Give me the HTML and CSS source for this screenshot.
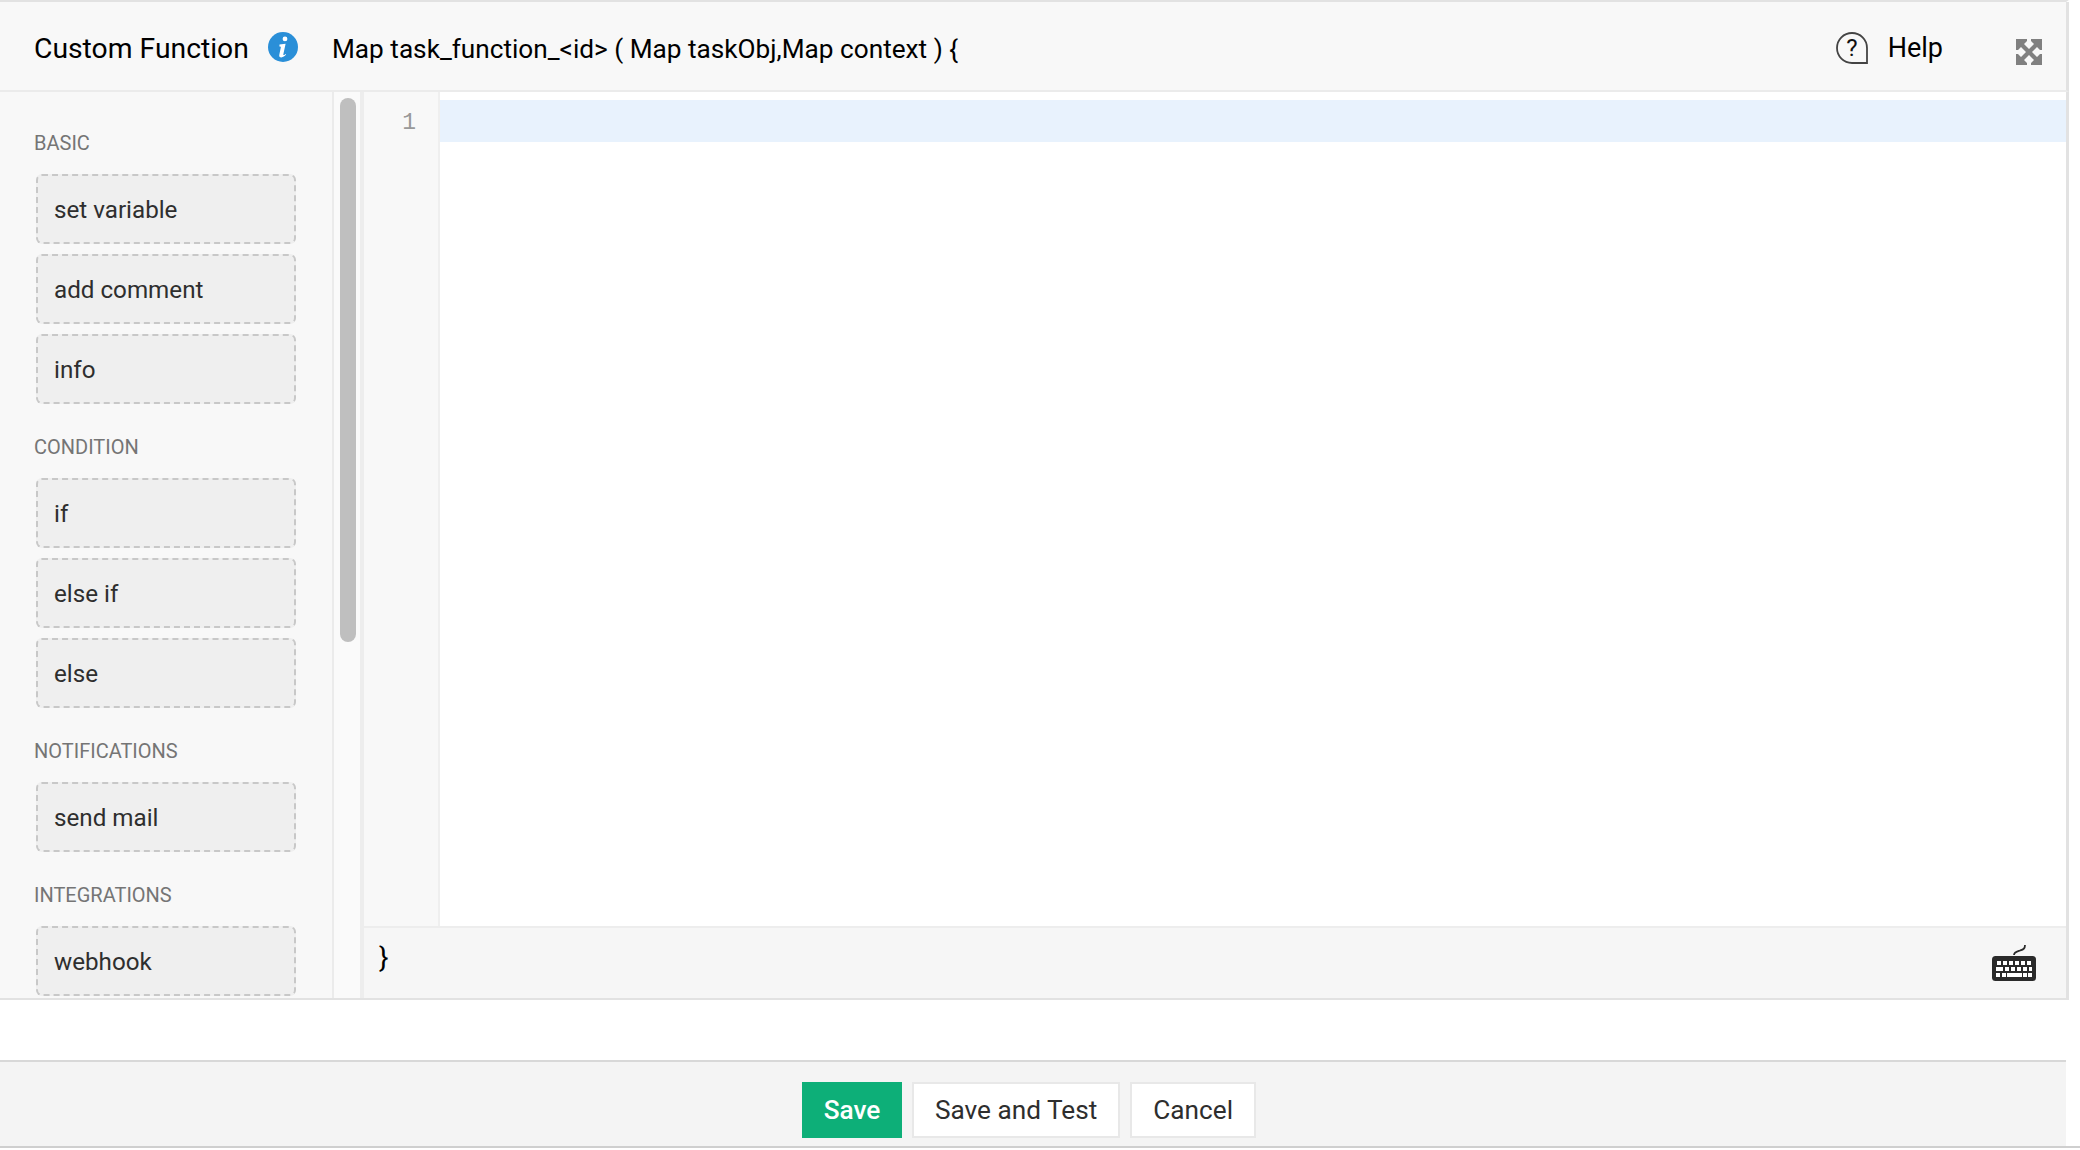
FILE: index.html
```html
<!DOCTYPE html>
<html lang="en">
<head>
<meta charset="utf-8">
<title>Custom Function</title>
<link rel="stylesheet" href="styles.css">
</head>
<body>
<div class="app">
  <div class="panel">
    <header class="head">
      <span class="title">Custom Function</span>
      <svg class="info" width="30" height="30" viewBox="0 0 30 30"><circle cx="15" cy="15" r="15" fill="#2a8fd8"/><path d="M17 4.500a2.400 2.400 0 1 1 0 4.800 2.400 2.400 0 0 1 0-4.800zM11.500 12.600l6.100-.8-2.300 10.600c-.1.700.4.900 1 .5l1.300-1 .5.700c-1.500 1.800-3.100 2.800-4.700 2.800-1.700 0-2.500-1-2.100-2.700l1.500-7.100c.1-.7-.2-1-1.400-1z" fill="#fff"/></svg>
      <span class="signature">Map task_function_&lt;id&gt; ( Map taskObj,Map context ) {</span>
      <div class="help">
        <svg width="32" height="32" viewBox="0 0 32 32"><path d="M31 31H16A15 15 0 1 1 31 16z" fill="none" stroke="#444" stroke-width="1.800"/><text x="16" y="24" class="qmark">?</text></svg>
        <span>Help</span>
      </div>
      <svg class="expand" width="26" height="26" viewBox="0 0 26 26"><path fill="#808080" d="M0 0h11v2L8 5l5 5 5-5-3-3V0h11v11h-2l-3-3-5 5 5 5 3-3h2v11H15v-2l3-3-5-5-5 5 3 3v2H0V15h2l3 3 5-5-5-5-3 3H0z"/></svg>
    </header>
    <div class="main">
      <aside class="side">
        <h3 class="group first">BASIC</h3>
        <div class="item">set variable</div>
        <div class="item">add comment</div>
        <div class="item">info</div>
        <h3 class="group">CONDITION</h3>
        <div class="item">if</div>
        <div class="item">else if</div>
        <div class="item">else</div>
        <h3 class="group">NOTIFICATIONS</h3>
        <div class="item">send mail</div>
        <h3 class="group">INTEGRATIONS</h3>
        <div class="item">webhook</div>
      </aside>
      <div class="track"><div class="thumb"></div></div>
      <section class="editor">
        <div class="code">
          <div class="gutter"><span class="lineno">1</span></div>
          <div class="lines"><div class="active"></div></div>
        </div>
        <div class="closing">
          <span class="brace">}</span>
          <svg width="44" height="37" viewBox="0 0 44 37"><path d="M22 11c0-3 3-3.500 6-4.500s5-1.500 5-5.500" fill="none" stroke="#2a2a2a" stroke-width="1.800"/><rect y="12" width="44" height="25" rx="3.500" fill="#2a2a2a"/><path fill="#fff" d="M5 17h4v4H5zM11 17h4v4h-4zM17 17h4v4h-4zM23 17h4v4h-4zM29 17h4v4h-4zM35 17h4v4h-4zM4 23h7v4H4zM13 23h4v4h-4zM19 23h4v4h-4zM25 23h4v4h-4zM31 23h4v4h-4zM37 23h3v4h-3zM4 29h4v4H4zM10 29h4v4h-4zM15 29h15v4H15zM31 29h4v4h-4zM36 29h4v4h-4z"/></svg>
        </div>
      </section>
    </div>
    <div class="spacer"></div>
    <footer class="foot">
      <button class="btn primary">Save</button>
      <button class="btn">Save and Test</button>
      <button class="btn">Cancel</button>
    </footer>
  </div>
  <div class="baseline"></div>
</div>
</body>
</html>
```
FILE: styles.css
```css
* { box-sizing: border-box; }
html, body { margin: 0; height: 100%; background: #fff; }
body { font-family: Roboto, "Liberation Sans", sans-serif; color: #000; overflow: hidden; }
.app { height: 1150px; }
.panel { width: 2069px; height: 1146px; display: flex; flex-direction: column; border-top: 2px solid #e2e2e2; border-right: 3px solid transparent; }
.head { height: 90px; flex: none; display: flex; align-items: center; padding: 4px 0 0 34px; background: #f8f8f8; border-bottom: 2px solid #ebebeb; margin-right: -3px; border-right: 3px solid #e2e2e2; }
.title { font-size: 28.300px; width: 234px; }
.info { flex: none; margin-top: -2px; }
.signature { font-size: 26.200px; margin: 1px 0 0 34px; }
.help { margin-left: auto; display: flex; align-items: center; gap: 20px; font-size: 27px; }
.qmark { font: 24px Roboto, sans-serif; fill: #111; text-anchor: middle; }
.expand { flex: none; margin: 8px 24px 0 73px; }
.main { height: 908px; flex: none; display: flex; overflow: hidden; border-bottom: 2px solid #e2e2e2; margin-right: -3px; border-right: 3px solid #e2e2e2; }
.side { width: 334px; flex: none; padding: 0 36px; background: #f8f8f8; border-right: 2px solid #ebebeb; overflow: hidden; }
.group { margin: 32px 0 19px -2px; height: 23px; font-size: 20px; line-height: 23px; font-weight: 400; color: #757575; }
.group.first { margin-top: 40px; margin-bottom: 19px; }
.item { height: 70px; margin-bottom: 10px; padding: 2px 0 0 16px; display: flex; align-items: center; font-size: 24.200px; color: #2e2e2e; background: #efefef; border: 2px dashed #c8c8c8; border-radius: 6px; width: 260px; }
.track { width: 30px; flex: none; padding: 6px 6px 0; background: #fafafa; border-right: 4px solid #ededed; }
.thumb { width: 16px; height: 544px; background: #bfbfbf; border-radius: 8px; }
.editor { flex: 1; min-width: 0; display: flex; flex-direction: column; }
.code { flex: 1; display: flex; min-height: 0; border-bottom: 2px solid #ededed; }
.gutter { width: 76px; flex: none; background: #f8f8f8; border-right: 2px solid #efefef; padding: 10px 22px 0 0; text-align: right; height: 100%; }
.lineno { display: block; font: 23px/42px "Liberation Mono", monospace; color: #999; }
.lines { flex: 1; padding-top: 8px; background: #fff; }
.active { height: 42px; background: #e8f2fd; }
.closing { height: 70px; flex: none; display: flex; align-items: flex-start; justify-content: space-between; padding: 14px 30px 0 15px; background: #f6f6f6; }
.closing svg { margin-top: 2px; }
.brace { font-size: 28px; line-height: 32px; }
.spacer { height: 60px; flex: none; background: #fff; }
.foot { flex: 1; display: flex; justify-content: center; align-items: flex-start; gap: 10px; padding: 20px 8px 0 0; background: #f4f4f4; border-top: 2px solid #d8d8d8; }
.baseline { height: 2px; background: #cfcfcf; }
.btn { height: 56px; padding: 0 21px; font: 26.200px Roboto, sans-serif; color: #2e2e2e; background: #fff; border: 2px solid #e8e8e8; }
.btn.primary { width: 100px; padding: 0; color: #fff; font-weight: 500; background: #0daf78; border: 0; }
```
